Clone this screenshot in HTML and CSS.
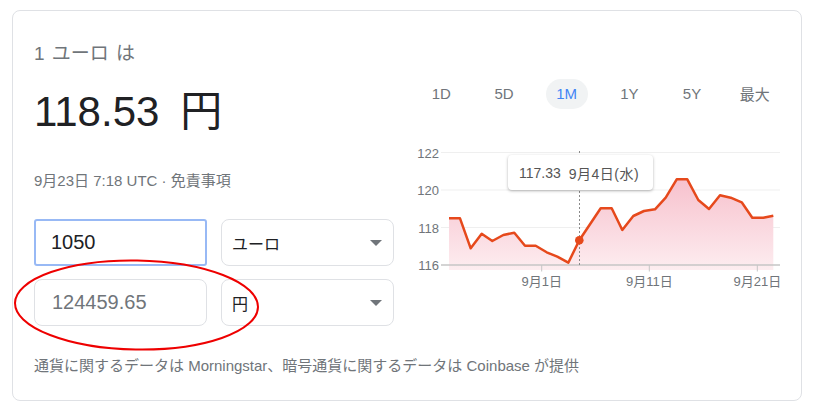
FILE: index.html
```html
<!DOCTYPE html>
<html lang="ja">
<head>
<meta charset="utf-8">
<title>ユーロ 円</title>
<link rel="stylesheet" href="styles.css">
</head>
<body>
<div class="card">
  <div class="top">
    <div class="left">
      <div class="title">1 ユーロ は</div>
      <div class="rate">118.53<span class="unit">円</span></div>
      <div class="date">9月23日 7:18 UTC · 免責事項</div>
      <div class="conv">
        <div class="field focus">1050</div>
        <div class="select"><span>ユーロ</span><span class="arrow"></span></div>
        <div class="field result">124459.65</div>
        <div class="select"><span>円</span><span class="arrow"></span></div>
      </div>
    </div>
    <div class="right">
      <div class="tabs">
        <div class="tab"><span>1D</span></div>
        <div class="tab"><span>5D</span></div>
        <div class="tab active"><span>1M</span></div>
        <div class="tab"><span>1Y</span></div>
        <div class="tab"><span>5Y</span></div>
        <div class="tab"><span>最大</span></div>
      </div>
      <svg class="chart" width="376" height="150" viewBox="410 140 376 150">
        <defs>
          <linearGradient id="fillg" gradientUnits="userSpaceOnUse" x1="0" y1="179" x2="0" y2="270">
            <stop offset="0" stop-color="#f7c1cd"/>
            <stop offset="1" stop-color="#fdedf0"/>
          </linearGradient>
        </defs>
        <g class="grid">
          <line x1="441" y1="152.5" x2="780" y2="152.5"/>
          <line x1="441" y1="190" x2="780" y2="190"/>
          <line x1="441" y1="227.5" x2="780" y2="227.5"/>
        </g>
        <polygon fill="url(#fillg)" points="449,218.3 460,218.3 470.7,248.3 481.7,233.7 492.3,241 503.3,235 514.3,232.7 525,245.7 535.7,245.7 546.7,252.3 557.3,256.7 568.3,262.7 579.3,240.3 590,224.3 600.7,208.3 611.7,208.3 622.3,230 633.3,216 644,211 655,209.3 665.7,197.7 676.7,179.3 687.3,179.3 698.3,200 709,209 720,195.3 730.7,197.7 741.7,202.3 752.3,217.7 763.3,217.7 773.3,215.7 773.3,270 449,270"/>
        <line class="axis" x1="441" y1="265" x2="780" y2="265"/>
        <g class="ticks">
          <line x1="541.7" y1="265" x2="541.7" y2="271.5"/>
          <line x1="649.3" y1="265" x2="649.3" y2="271.5"/>
          <line x1="757.3" y1="265" x2="757.3" y2="271.5"/>
        </g>
        <line class="cursor" x1="579.5" y1="151" x2="579.5" y2="265"/>
        <polyline class="line" points="449,218.3 460,218.3 470.7,248.3 481.7,233.7 492.3,241 503.3,235 514.3,232.7 525,245.7 535.7,245.7 546.7,252.3 557.3,256.7 568.3,262.7 579.3,240.3 590,224.3 600.7,208.3 611.7,208.3 622.3,230 633.3,216 644,211 655,209.3 665.7,197.7 676.7,179.3 687.3,179.3 698.3,200 709,209 720,195.3 730.7,197.7 741.7,202.3 752.3,217.7 763.3,217.7 773.3,215.7"/>
        <circle class="dot" cx="579.3" cy="240.3" r="4.3"/>
        <g class="ylab">
          <text x="439" y="157.5">122</text>
          <text x="439" y="195">120</text>
          <text x="439" y="232.5">118</text>
          <text x="439" y="270">116</text>
        </g>
        <g class="xlab">
          <text x="541.7" y="286">9月1日</text>
          <text x="649.3" y="286">9月11日</text>
          <text x="757.3" y="286">9月21日</text>
        </g>
      </svg>
      <div class="tooltip"><span>117.33</span><span class="tdate">9月4日(水)</span></div>
    </div>
  </div>
  <div class="footer">通貨に関するデータは Morningstar、暗号通貨に関するデータは Coinbase が提供</div>
  <svg class="circle" width="260" height="110" viewBox="0 0 260 110">
    <ellipse cx="123.5" cy="54" rx="121.5" ry="44.5" transform="rotate(1 123.5 54)"/>
  </svg>
</div>
</body>
</html>
```

FILE: styles.css
```css
html, body {
  margin: 0;
  padding: 0;
  background: #fff;
}

body {
  font-family: "Liberation Sans", Arial, "Noto Sans CJK JP", sans-serif;
  color: #202124;
}

.card {
  position: relative;
  box-sizing: border-box;
  margin: 10px 0 0 12px;
  width: 790px;
  height: 391px;
  border: 1px solid #dfe1e5;
  border-radius: 8px;
  padding: 31px 15px 0 21px;
}

.top {
  display: flex;
  gap: 16px;
  align-items: flex-start;
}

.left {
  width: 360px;
}

.title {
  font-size: 19px;
  line-height: 24px;
  color: #70757a;
  word-spacing: 2px;
}

.rate {
  margin-top: 21px;
  font-size: 42px;
  line-height: 50px;
  color: #202124;
}

.unit {
  margin-left: 21px;
}

.date {
  margin-top: 34px;
  font-size: 15px;
  line-height: 20px;
  color: #70757a;
}

.conv {
  margin-top: 28px;
  display: grid;
  grid-template-columns: 173px 173px;
  grid-auto-rows: 47px;
  column-gap: 14px;
  row-gap: 13px;
}

.field {
  box-sizing: border-box;
  display: flex;
  align-items: center;
  padding-left: 16px;
  font-size: 20px;
  border: 1px solid #dfe1e5;
  border-radius: 8px;
}

.field.focus {
  border: 2px solid #98b9f5;
  border-radius: 3px;
  padding-left: 15px;
  color: #202124;
}

.field.result {
  color: #70757a;
  padding-left: 17px;
}

.select {
  box-sizing: border-box;
  display: flex;
  align-items: center;
  justify-content: space-between;
  padding: 0 11px 0 10px;
  font-size: 16px;
  border: 1px solid #dfe1e5;
  border-radius: 8px;
  color: #202124;
}

.arrow {
  width: 0;
  height: 0;
  border-left: 6px solid transparent;
  border-right: 6px solid transparent;
  border-top: 6px solid #70757a;
}

.right {
  position: relative;
  width: 376px;
  margin-top: 37px;
}

.tabs {
  display: grid;
  grid-template-columns: repeat(6, 1fr);
  height: 30px;
}

.tab {
  display: flex;
  align-items: center;
  justify-content: center;
  font-size: 15px;
  color: #70757a;
}

.tab span {
  display: flex;
  align-items: center;
  justify-content: center;
  height: 30px;
  min-width: 42px;
  border-radius: 15px;
  padding-bottom: 1px;
  box-sizing: border-box;
}

.tab.active span {
  background: #f1f3f4;
  color: #4285f4;
}

.chart {
  display: block;
  margin-top: 31px;
  overflow: visible;
}

.grid line {
  stroke: #efefef;
  stroke-width: 1;
}

.axis {
  stroke: #c6c6c6;
  stroke-width: 1.5;
}

.ticks line {
  stroke: #c6c6c6;
  stroke-width: 1;
}

.cursor {
  stroke: #8a8a8a;
  stroke-width: 1;
  stroke-dasharray: 2 2;
}

.line {
  fill: none;
  stroke: #e6491c;
  stroke-width: 2.5;
  stroke-linejoin: round;
}

.dot {
  fill: #e6491c;
}

.ylab text {
  font-size: 13px;
  fill: #70757a;
  text-anchor: end;
}

.xlab text {
  font-size: 13px;
  fill: #70757a;
  text-anchor: middle;
}

.tooltip {
  position: absolute;
  left: 98px;
  top: 76px;
  box-sizing: border-box;
  width: 145px;
  height: 35px;
  padding-left: 11px;
  display: flex;
  align-items: center;
  background: #fff;
  border-radius: 4px;
  box-shadow: 0 1px 3px rgba(0, 0, 0, 0.3);
  font-size: 14px;
  color: #555;
}

.tdate {
  margin-left: 8px;
  letter-spacing: 0.5px;
}

.footer {
  margin-top: 30px;
  font-size: 15px;
  line-height: 20px;
  color: #70757a;
}

.circle {
  position: absolute;
  left: 0;
  top: 240px;
  overflow: visible;
}

.circle ellipse {
  fill: none;
  stroke: #e00;
  stroke-width: 2;
}
```
